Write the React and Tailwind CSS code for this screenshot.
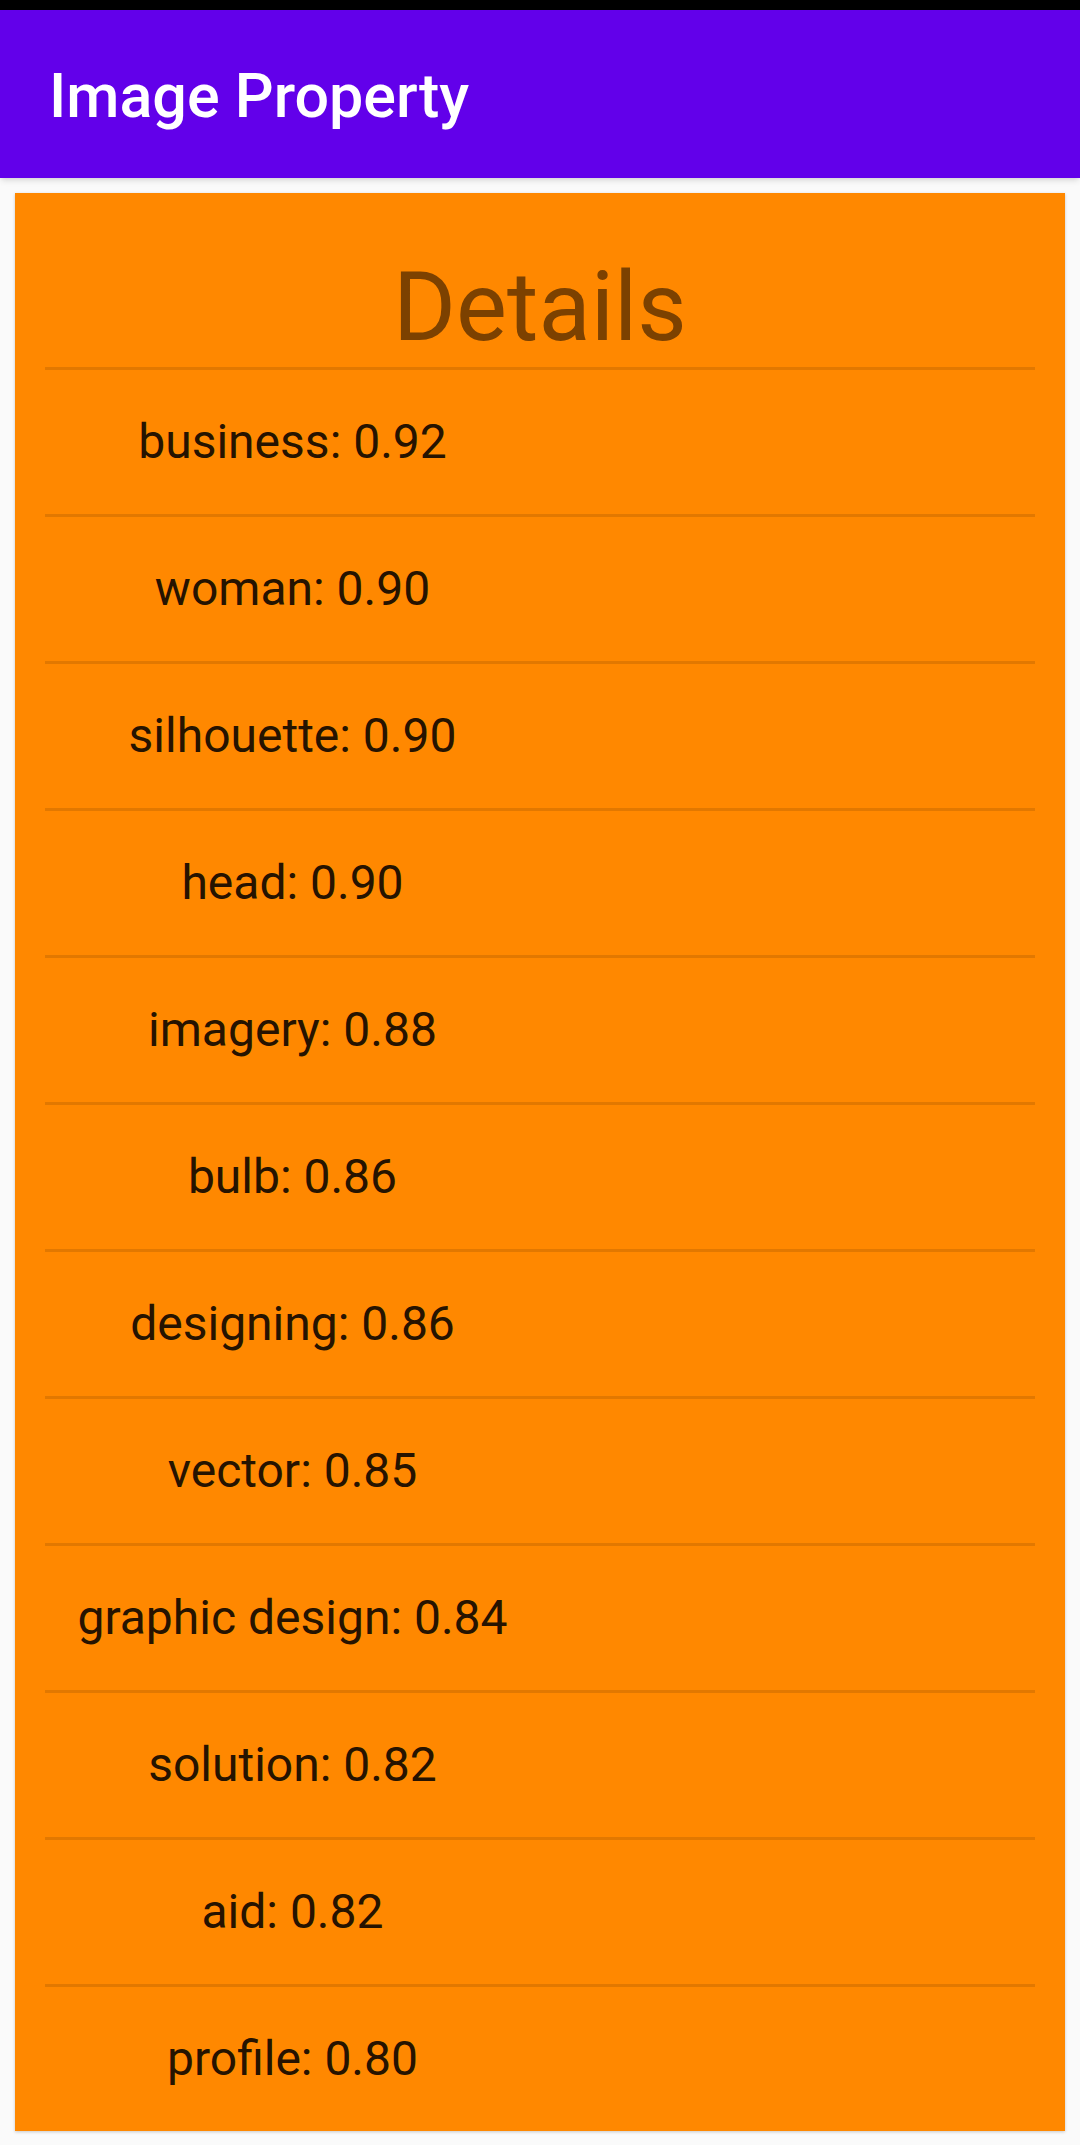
const tags = [
  ['business', '0.92'],
  ['woman', '0.90'],
  ['silhouette', '0.90'],
  ['head', '0.90'],
  ['imagery', '0.88'],
  ['bulb', '0.86'],
  ['designing', '0.86'],
  ['vector', '0.85'],
  ['graphic design', '0.84'],
  ['solution', '0.82'],
  ['aid', '0.82'],
  ['profile', '0.80'],
];

function TagRow({ label, score }) {
  return (
    <div className="grid grid-cols-2 items-center h-[147px] border-t-[3px] border-[#e27800]">
      <div className="text-center text-[48px] text-[#261300]">
        {label}: {score}
      </div>
      <div />
    </div>
  );
}

export default function App() {
  return (
    <div className="min-h-[2145px] bg-[#fafafa] font-['Roboto',sans-serif]">
      {/* status bar */}
      <div className="h-[10px] bg-black" />

      {/* toolbar */}
      <header className="h-[168px] flex items-center pl-[49px] pt-[5px] bg-[#6200ea] shadow-md">
        <h1 className="text-[61px] font-medium text-white">Image Property</h1>
      </header>

      {/* details card */}
      <main className="px-[15px] pt-[15px] pb-[14px]">
        <section className="bg-[#ff8800] px-[30px] shadow-[0_1px_3px_rgba(0,0,0,0.2)]">
          <h2 className="h-[174px] pt-[56px] text-center text-[96px] leading-[116px] text-[#7c4100]">
            Details
          </h2>
          {tags.map(([label, score]) => (
            <TagRow key={label} label={label} score={score} />
          ))}
        </section>
      </main>
    </div>
  );
}
